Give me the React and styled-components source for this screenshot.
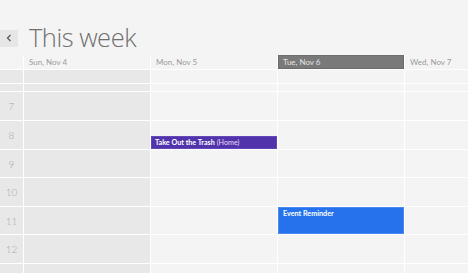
import React from "react";
import styled, { createGlobalStyle } from "styled-components";

const Global = createGlobalStyle`
  html, body { margin: 0; padding: 0; background: #f4f4f4; overflow: hidden; }
  body { font-family: Lato, "Open Sans", sans-serif; }
`;

const Page = styled.div`
  width: 468px;
  height: 273px;
  overflow: hidden;
  background: #f4f4f4;
`;

const TitleBar = styled.div`
  display: flex;
  align-items: center;
  gap: 11px;
  height: 36px;
  padding-top: 19px;
`;

const BackButton = styled.div`
  width: 18px;
  height: 17px;
  margin-top: 2px;
  background: #e6e6e6;
  display: flex;
  align-items: center;
  justify-content: center;
`;

const Title = styled.h1`
  margin: 0;
  font-family: "Open Sans", sans-serif;
  font-weight: 300;
  font-size: 25.5px;
  letter-spacing: -0.5px;
  line-height: 36px;
  color: #707070;
`;

const Grid = styled.div`
  display: grid;
  grid-template-columns: 23px 126px 126px 126px 1fr;
  grid-template-rows: 14px 13px 7px 28px 28px 27px 28px 27px 28px 20px;
  column-gap: 1px;
  row-gap: 1px;
  background: #ffffff;
`;

const HeaderCell = styled.div`
  background: ${(p) => (p.$today ? "#797979" : "#f4f4f4")};
  box-shadow: ${(p) => (p.$today ? "inset 0 0 0 1px #6c6c6c" : "none")};
  color: ${(p) => (p.$today ? "#e4e4e4" : "#9a9a9a")};
  font-family: Lato, "Open Sans", sans-serif;
  font-size: 8px;
  line-height: 14px;
  padding-left: 5px;
  white-space: nowrap;
`;

const Cell = styled.div`
  background: ${(p) => (p.$shade ? "#e8e8e8" : "#f4f4f4")};
  display: flex;
  flex-direction: column;
  justify-content: ${(p) => (p.$bottom ? "flex-end" : "flex-start")};
`;

const HourLabel = styled.div`
  background: #e8e8e8;
  color: #a8a8a8;
  font-family: Lato, "Open Sans", sans-serif;
  font-weight: 300;
  font-size: 10px;
  display: flex;
  align-items: center;
  justify-content: center;
`;

const Event = styled.div`
  background: ${(p) => p.$color};
  box-shadow: inset 0 0 0 1px ${(p) => p.$edge};
  color: #ffffff;
  font-family: Lato, "Open Sans", sans-serif;
  font-size: 7.2px;
  line-height: 12px;
  padding: ${(p) => p.$pad};
  white-space: nowrap;
  overflow: hidden;
  height: ${(p) => p.$h};
  box-sizing: border-box;
  position: relative;
  z-index: 1;
`;

const EventTitle = styled.span`
  font-weight: 700;
`;

const EventWhere = styled.span`
  font-weight: 400;
  color: #e6def6;
`;

const days = [
  { label: "Sun, Nov 4", weekend: true },
  { label: "Mon, Nov 5" },
  { label: "Tue, Nov 6", today: true },
  { label: "Wed, Nov 7" },
];

const hours = ["7", "8", "9", "10", "11", "12", ""];

function renderEvent(dayIdx, hour) {
  if (dayIdx === 1 && hour === "8") {
    return (
      <Event $color="#5133ab" $edge="#6247b8" $h="13px" $pad="1px 4px 0">
        <EventTitle>Take Out the Trash</EventTitle> <EventWhere>(Home)</EventWhere>
      </Event>
    );
  }
  if (dayIdx === 2 && hour === "11") {
    return (
      <Event $color="#2672ec" $edge="#4a8af0" $h="100%" $pad="1px 5px 0">
        <EventTitle>Event Reminder</EventTitle>
      </Event>
    );
  }
  return null;
}

export default function App() {
  return (
    <Page>
      <Global />
      <TitleBar>
        <BackButton>
          <svg width="6" height="8" viewBox="0 0 6 8">
            <path d="M4.5 1 L1.5 4 L4.5 7" fill="none" stroke="#555" strokeWidth="1.2" />
          </svg>
        </BackButton>
        <Title>This week</Title>
      </TitleBar>
      <Grid>
        <HeaderCell />
        {days.map((d) => (
          <HeaderCell key={d.label} $today={d.today}>
            {d.label}
          </HeaderCell>
        ))}
        {[0, 1].map((r) => (
          <React.Fragment key={"ad" + r}>
            <Cell $shade />
            {days.map((d) => (
              <Cell key={d.label} $shade={d.weekend} />
            ))}
          </React.Fragment>
        ))}
        {hours.map((h) => (
          <React.Fragment key={"h" + h}>
            <HourLabel>{h}</HourLabel>
            {days.map((d, i) => (
              <Cell key={d.label} $shade={d.weekend} $bottom={i === 1 && h === "8"}>
                {renderEvent(i, h)}
              </Cell>
            ))}
          </React.Fragment>
        ))}
      </Grid>
    </Page>
  );
}
